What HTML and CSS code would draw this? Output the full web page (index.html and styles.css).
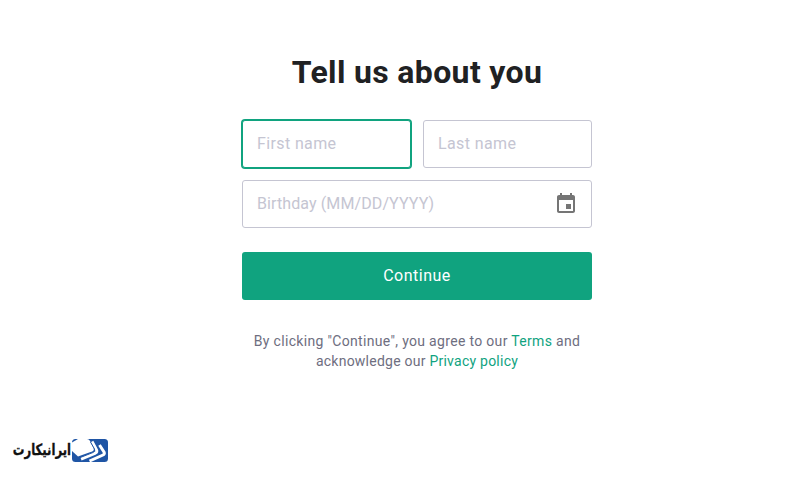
FILE: index.html
```html
<!DOCTYPE html>
<html lang="en">
<head>
  <meta charset="UTF-8" />
  <meta name="viewport" content="width=device-width, initial-scale=1.0" />
  <title>Tell us about you</title>
  <link rel="stylesheet" href="styles.css">
</head>
<body>
  <main class="container">
    <h1>Tell us about you</h1>

    <form>
      <div class="row">
        <input type="text" class="active" placeholder="First name" />
        <input type="text" placeholder="Last name" />
      </div>
      <div class="birthday">
        <input type="text" placeholder="Birthday (MM/DD/YYYY)" />
        <svg class="calendar" viewBox="0 0 24 24" width="24" height="24">
          <path fill="#757575" d="M17 12h-5v5h5v-5zM16 1v2H8V1H6v2H5c-1.11 0-1.99.9-1.99 2L3 19c0 1.1.89 2 2 2h14c1.1 0 2-.9 2-2V5c0-1.1-.9-2-2-2h-1V1h-2zm3 18H5V8h14v11z"/>
        </svg>
      </div>
      <button type="button">Continue</button>
    </form>

    <p class="legal">By clicking "Continue", you agree to our <a href="#">Terms</a> and<br>
      <span class="second">acknowledge our <a href="#">Privacy policy</a></span></p>
  </main>

  <footer class="brand">
    <span class="brand-name" lang="fa" dir="rtl">ایرانیکارت</span>
    <svg class="brand-logo" viewBox="0 0 36 23" width="36" height="23">
      <rect width="36" height="23" rx="3.5" fill="#1f55a5"/>
      <path fill="#fff" d="M0 3.500L6 0h9q2 0 3 2l3.500 7q1 2.500-1.500 3.500L6 17.500 0 12z"/>
      <path fill="none" stroke="#fff" stroke-width="3" stroke-linejoin="round" d="M20 2.500l4.500 8.500q1 2-1 3L9 20"/>
      <path fill="none" stroke="#fff" stroke-width="3" stroke-linejoin="round" d="M27.500 6l4.500 7q1 2-1 3L17.500 22"/>
      <path fill="none" stroke="#1f55a5" stroke-width="1" d="M18.500 3l4 7q1 2.500-1.500 3.500L7 19"/>
    </svg>
  </footer>
</body>
</html>
```

FILE: styles.css
```css
* {
  box-sizing: border-box;
}
body {
  margin: 0;
  height: 477px;
  display: flex;
  flex-direction: column;
  justify-content: space-between;
  background: #fff;
  color: #202123;
  font-family: Roboto, sans-serif;
  overflow: hidden;
}
.container {
  width: 350px;
  margin-left: 242px;
  padding-top: 52px;
}
h1 {
  margin: 0 0 28px;
  font-size: 32px;
  line-height: 40px;
  font-weight: 700;
  letter-spacing: 0.35px;
  text-align: center;
  white-space: nowrap;
}
form {
  display: flex;
  flex-direction: column;
  gap: 12px;
}
.row {
  display: flex;
  gap: 12px;
}
input {
  width: 100%;
  min-width: 0;
  height: 48px;
  padding: 0 14px 2px;
  border: 1px solid #c5c5d2;
  border-radius: 3px;
  background: #fff;
  font: 16px Roboto, sans-serif;
  letter-spacing: 0.38px;
  outline: none;
}
input::placeholder {
  color: #c5c5d2;
}
.active {
  border-color: #10a37f;
  box-shadow: 0 0 0 1px #10a37f;
}
.birthday {
  position: relative;
}
.birthday input {
  display: block;
  letter-spacing: 0.1px;
}
.calendar {
  position: absolute;
  top: 12px;
  right: 14px;
}
button {
  height: 48px;
  margin-top: 12px;
  padding: 0 0 2px;
  border: none;
  border-radius: 3px;
  background: #10a37f;
  color: #fff;
  font: 16px Roboto, sans-serif;
  letter-spacing: 0.5px;
}
.legal {
  margin: 31px 0 0;
  color: #6e6e80;
  font-size: 14px;
  line-height: 20px;
  letter-spacing: 0.32px;
  text-align: center;
  white-space: nowrap;
}
.second {
  letter-spacing: 0.24px;
}
.legal a {
  color: #10a37f;
  text-decoration: none;
}
.brand {
  display: flex;
  align-items: center;
  gap: 1px;
  padding: 0 0 15px 13px;
}
.brand-name {
  width: 58px;
  color: #111;
  font: bold 14px/23px "DejaVu Sans", sans-serif;
  white-space: nowrap;
  transform: scale(0.83, 1.1);
  transform-origin: right center;
  -webkit-text-stroke: 0.3px #111;
}
```
